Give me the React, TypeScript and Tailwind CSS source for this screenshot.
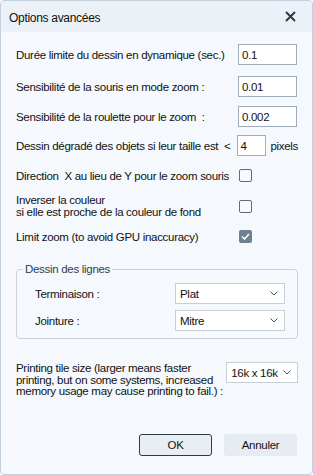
import React from "react";

const Chevron = () => (
  <svg width="8" height="5" viewBox="0 0 8 5" className="shrink-0">
    <path d="M0.5 0.5 L4 4 L7.5 0.5" fill="none" stroke="#4a5561" strokeWidth="1" />
  </svg>
);

const Input = ({ v, w = "w-[59px]" }: { v: string; w?: string }) => (
  <div className={`${w} h-[21px] border border-[#9fadbb] bg-white flex items-center pl-[3px]`}>{v}</div>
);

const Check = ({ checked }: { checked?: boolean }) =>
  checked ? (
    <div className="ml-[1px] w-[13px] h-[13px] rounded-[2px] bg-[#6f8092] flex items-center justify-center">
      <svg width="9" height="7" viewBox="0 0 9 7">
        <path d="M1 3.5 L3.5 6 L8 1" fill="none" stroke="#fff" strokeWidth="1.6" />
      </svg>
    </div>
  ) : (
    <div className="ml-[1px] w-[13px] h-[13px] rounded-[2px] border border-[#5d6d7d] bg-[#f7fafd]" />
  );

const Select = ({ v, w }: { v: string; w: string }) => (
  <div className={`${w} h-[21px] border border-[#c6ced6] bg-white flex items-center justify-between pl-[4px] pr-[6px]`}>
    <span>{v}</span>
    <Chevron />
  </div>
);

export default function App() {
  return (
    <div
      className="w-[313px] h-[475px] border border-[#c2d0de] rounded-[4px] bg-[#f5f9fd] flex flex-col text-[#111] text-[11.5px] tracking-[-0.3px] leading-[12px] whitespace-nowrap overflow-hidden"
      style={{ fontFamily: '"Liberation Sans", Arial, sans-serif' }}
    >
      <div className="h-[31px] shrink-0 bg-[#ecf1f7] flex items-center justify-between pl-[8px] pr-[16px]">
        <span className="text-[12px] mt-[2px]">Options avancées</span>
        <svg width="11" height="11" viewBox="0 0 11 11">
          <path d="M1 1 L10 10 M10 1 L1 10" stroke="#2d3b4a" strokeWidth="2" />
        </svg>
      </div>

      <div className="flex flex-col pl-[15px] pr-[14px]">
        <div className="flex items-center mt-[12px] h-[21px]">
          <span className="w-[222px]">Durée limite du dessin en dynamique (sec.)</span>
          <Input v="0.1" />
        </div>
        <div className="flex items-center mt-[11px] h-[21px]">
          <span className="w-[222px]">Sensibilité de la souris en mode zoom :</span>
          <Input v="0.01" />
        </div>
        <div className="flex items-center mt-[9px] h-[21px]">
          <span className="w-[222px]">Sensibilité de la roulette pour le zoom&nbsp;&nbsp;:</span>
          <Input v="0.002" />
        </div>
        <div className="flex items-center mt-[8px] h-[21px]">
          <span className="w-[222px]">Dessin dégradé des objets si leur taille est&nbsp;&nbsp;&lt;</span>
          <Input v="4" w="w-[30px]" />
          <span className="ml-[4px]">pixels</span>
        </div>
        <div className="flex items-center mt-[13px] h-[13px]">
          <span className="w-[222px]">Direction&nbsp;&nbsp;X au lieu de Y pour le zoom souris</span>
          <Check />
        </div>
        <div className="flex items-center mt-[12px] h-[24px]">
          <span className="w-[222px]">
            Inverser la couleur
            <br />
            si elle est proche de la couleur de fond
          </span>
          <Check />
        </div>
        <div className="flex items-center mt-[12px] h-[13px]">
          <span className="w-[222px]">Limit zoom (to avoid GPU inaccuracy)</span>
          <Check checked />
        </div>

        <fieldset className="mt-[20px] w-[282px] h-[76px] border border-[#c8d2dc] rounded-[4px] flex flex-col">
          <legend className="ml-[6px] px-[2px] text-[#333d48] leading-[12px]">Dessin des lignes</legend>
          <div className="flex items-center mt-[8px] h-[21px] pl-[18px]">
            <span className="w-[140px]">Terminaison :</span>
            <Select v="Plat" w="w-[110px]" />
          </div>
          <div className="flex items-center mt-[6px] h-[21px] pl-[18px]">
            <span className="w-[140px]">Jointure :</span>
            <Select v="Mitre" w="w-[110px]" />
          </div>
        </fieldset>

        <div className="flex items-start mt-[23px]">
          <span className="w-[211px] leading-[11.5px] mt-[1px]">
            Printing tile size (larger means faster
            <br />
            printing, but on some systems, increased
            <br />
            memory usage may cause printing to fail.) :
          </span>
          <Select v="16k x 16k" w="w-[72px]" />
        </div>

        <div className="flex justify-end gap-[12px] mt-[36px] pr-[1px]">
          <div className="w-[73px] h-[22px] border border-[#2f3a45] rounded-[3px] bg-[#e9eef4] flex items-center justify-center">OK</div>
          <div className="w-[73px] h-[22px] rounded-[3px] bg-[#e6ecf2] flex items-center justify-center">Annuler</div>
        </div>
      </div>
    </div>
  );
}
